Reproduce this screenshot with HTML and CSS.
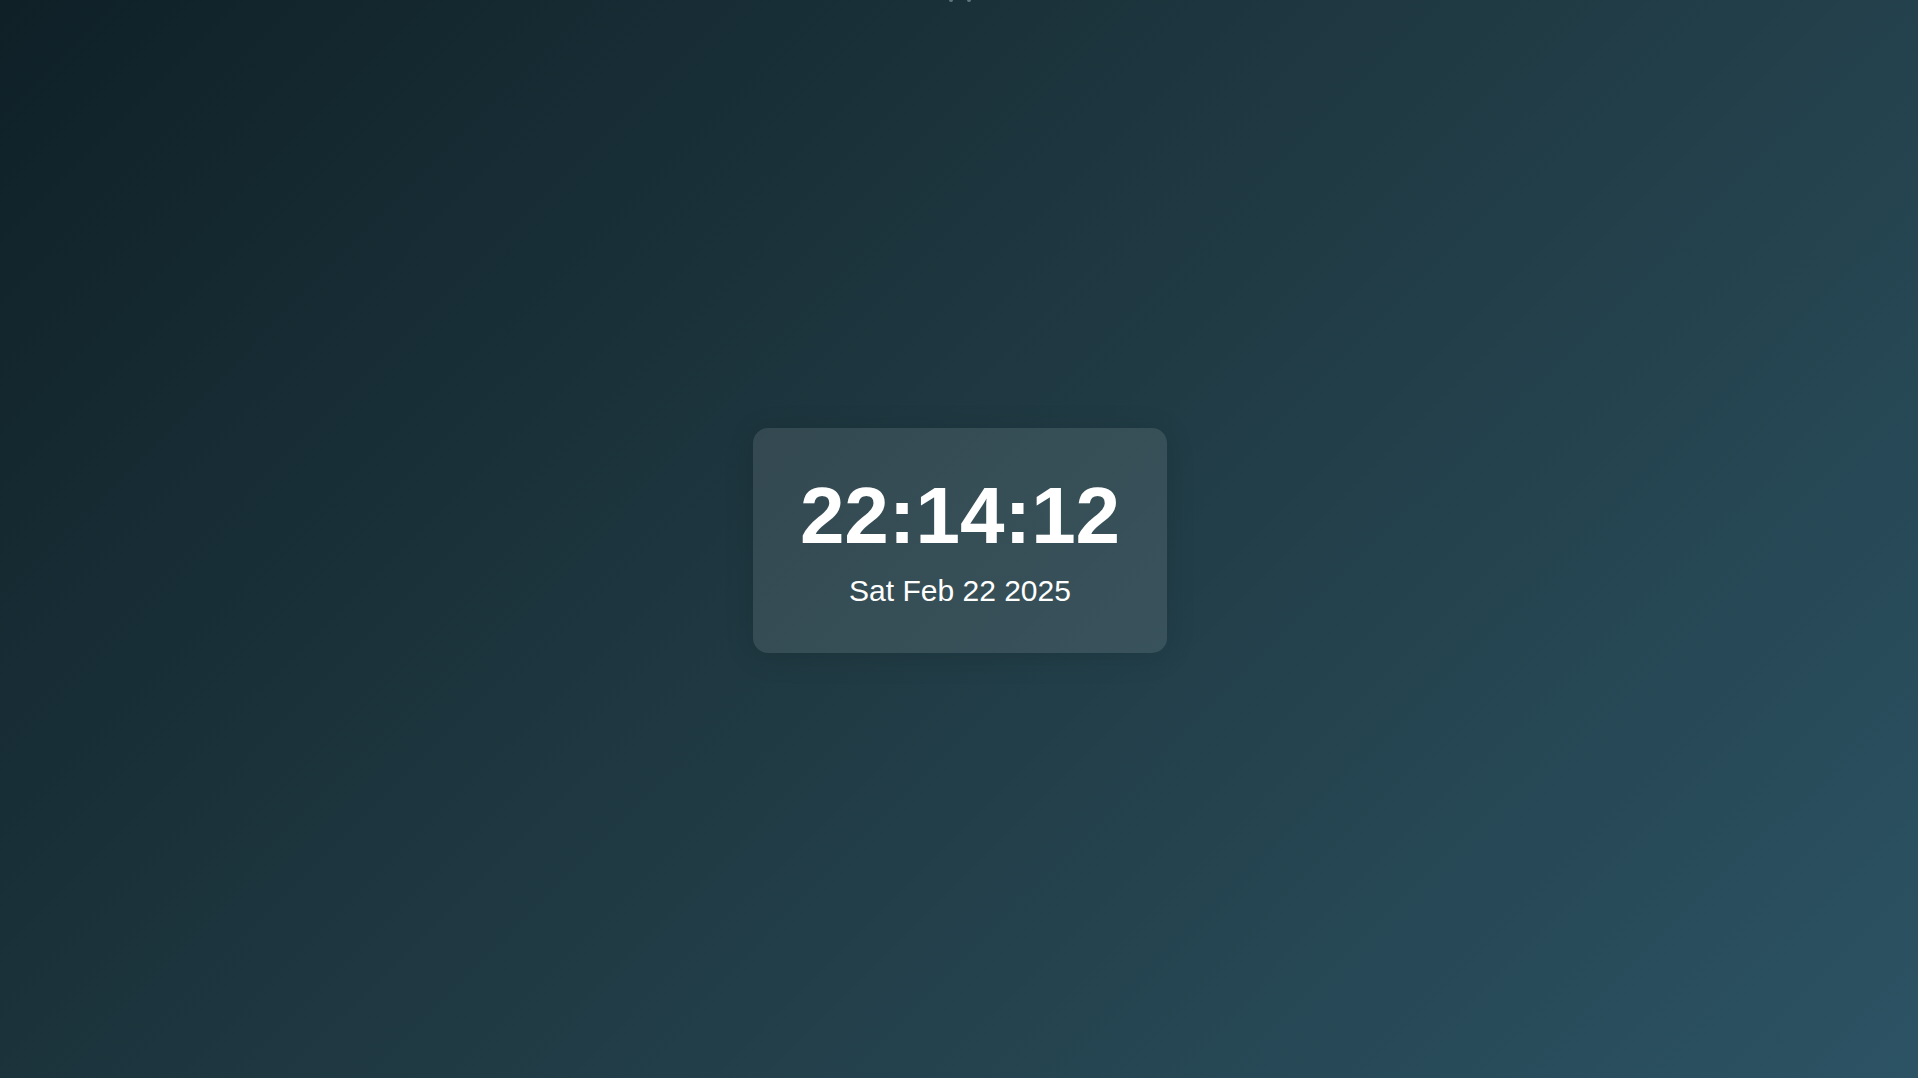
FILE: index.html
```html
<!DOCTYPE html>
<html lang="en">
<head>
<meta charset="utf-8">
<title>Clock</title>
<link rel="stylesheet" href="styles.css">
</head>
<body>
<div class="top-mark"><span class="dot"></span><span class="dot"></span></div>
<main class="stage">
  <section class="clock-card">
    <div class="time">22:14:12</div>
    <div class="date">Sat Feb 22 2025</div>
  </section>
</main>
</body>
</html>
```
FILE: styles.css
```css
html, body {
  margin: 0;
  padding: 0;
  height: 100%;
}
body {
  background: linear-gradient(135deg, #0f2027 0%, #203a43 50%, #2c5364 100%);
  font-family: "Liberation Sans", Arial, sans-serif;
  color: #ffffff;
  overflow: hidden;
}
.top-mark {
  position: absolute;
  top: 0;
  left: 949px;
  display: flex;
  gap: 14px;
}
.dot {
  width: 4px;
  height: 2px;
  border-radius: 0 0 2px 2px;
  background: rgba(160, 175, 180, 0.55);
}
.stage {
  height: 100%;
  display: flex;
  align-items: center;
  justify-content: center;
}
.clock-card {
  display: flex;
  flex-direction: column;
  align-items: center;
  gap: 12px;
  padding: 42px 47px 45px;
  margin-top: 3px;
  margin-left: 2px;
  border-radius: 15px;
  background: rgba(255, 255, 255, 0.1);
  box-shadow: 0 4px 30px rgba(0, 0, 0, 0.12);
}
.time {
  font-size: 80px;
  font-weight: 700;
  line-height: normal;
}
.date {
  font-size: 30px;
  line-height: normal;
}
```
